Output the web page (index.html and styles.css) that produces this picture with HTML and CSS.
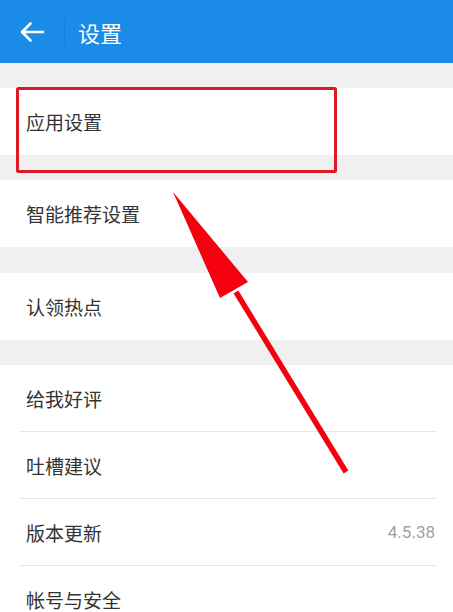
FILE: index.html
```html
<!DOCTYPE html>
<html lang="zh-CN">
<head>
    <meta charset="UTF-8">
    <meta name="viewport" content="width=device-width, initial-scale=1.0">
    <title>设置</title>
    <link rel="stylesheet" href="styles.css">
</head>
<body>
    <div class="page">
        <!-- Top Bar -->
        <div class="top-bar">
            <button class="back-button" aria-label="返回">
                <svg width="26" height="22" viewBox="0 0 26 22">
                    <path d="M24 11H3 M11.5 2.5L3 11l8.5 8.5" fill="none" stroke="#fff" stroke-width="2.6" stroke-linecap="round" stroke-linejoin="round"/>
                </svg>
            </button>
            <span class="bar-divider"></span>
            <h1 class="title">设置</h1>
        </div>

        <!-- Settings List -->
        <div class="gap"></div>
        <div class="row">应用设置</div>
        <div class="gap"></div>
        <div class="row">智能推荐设置</div>
        <div class="gap gap-tall"></div>
        <div class="row">认领热点</div>
        <div class="gap"></div>
        <div class="row row-compact">给我好评</div>
        <div class="divider"></div>
        <div class="row row-compact">吐槽建议</div>
        <div class="divider"></div>
        <div class="row row-compact">版本更新<span class="value">4.5.38</span></div>
        <div class="divider"></div>
        <div class="row row-compact">帐号与安全</div>

        <!-- Annotation -->
        <svg class="annotation" width="453" height="612" viewBox="0 0 453 612">
            <rect x="17.5" y="88.5" width="318" height="83" fill="none" stroke="#dd1a22" stroke-width="3" rx="1"/>
            <line x1="236" y1="292" x2="346" y2="472" stroke="#f5000f" stroke-width="5.5"/>
            <polygon points="173,192 248,282 220,298" fill="#f5000f"/>
        </svg>
    </div>
</body>
</html>
```

FILE: styles.css
```css
/* Reset */
body, html {
    margin: 0;
    padding: 0;
    width: 100%;
    height: 100%;
    overflow: hidden;
    font-family: "Noto Sans CJK SC", "Noto Sans", sans-serif;
    background-color: #fff;
    color: #333;
}

.page {
    position: relative;
    width: 453px;
    height: 612px;
    overflow: hidden;
}

/* Top Bar */
.top-bar {
    height: 63px;
    display: flex;
    align-items: center;
    background: #1b8be8;
    color: #fff;
}

.back-button {
    width: 64px;
    height: 63px;
    padding: 0 0 0 19px;
    display: flex;
    align-items: center;
    background: none;
    border: none;
    cursor: pointer;
}

.bar-divider {
    width: 1px;
    height: 28px;
    background: rgba(0, 0, 0, 0.08);
}

.title {
    margin: 0 0 0 13px;
    font-size: 22px;
    font-weight: normal;
    letter-spacing: 0;
}

/* List */
.gap {
    height: 25px;
    background: #f0f0f0;
}

.gap-tall {
    height: 26px;
}

.row {
    height: 67px;
    padding: 0 18px 0 26px;
    display: flex;
    align-items: center;
    justify-content: space-between;
    font-size: 19px;
    background: #fff;
}

.row-compact {
    height: 66px;
}

.divider {
    height: 1px;
    margin: 0 16px 0 20px;
    background: #e6e6e6;
}

.value {
    font-family: Roboto, "Noto Sans", sans-serif;
    font-size: 17px;
    color: #a0a0a0;
}

/* Red annotation drawn over the list */
.annotation {
    position: absolute;
    top: 0;
    left: 0;
    pointer-events: none;
}
```
